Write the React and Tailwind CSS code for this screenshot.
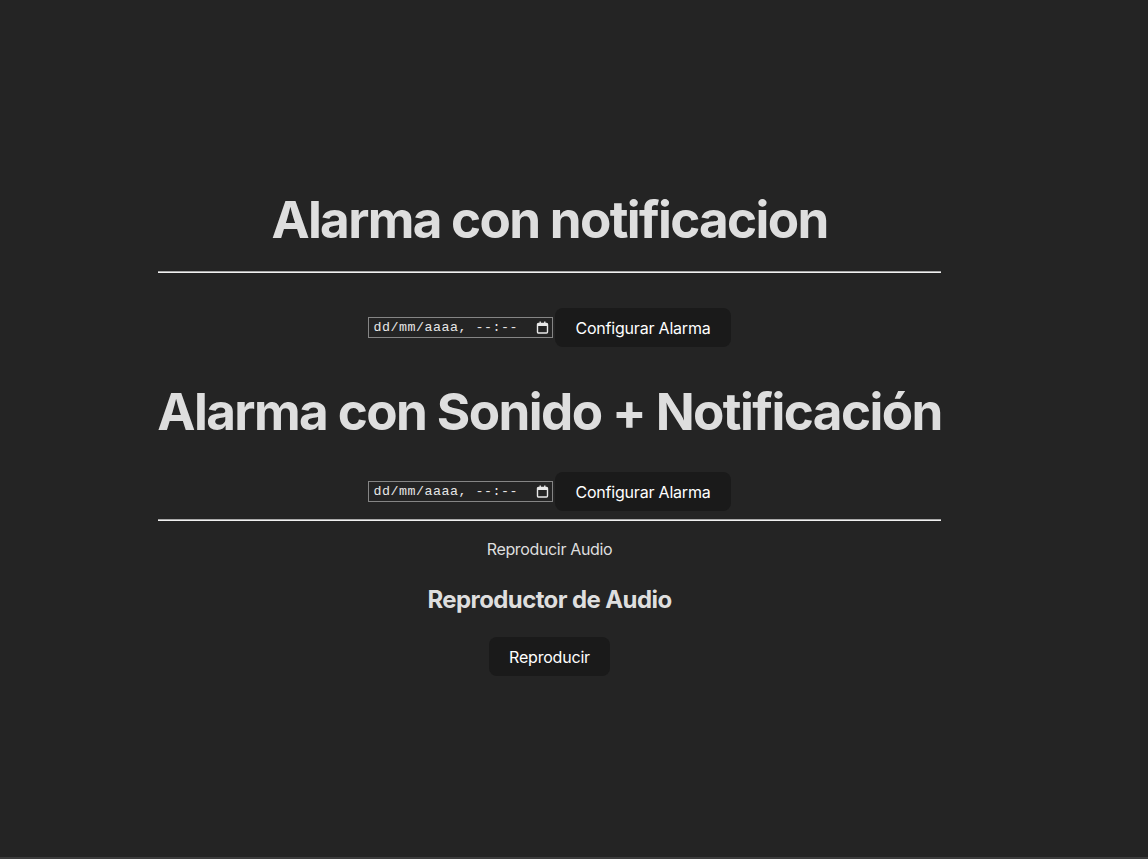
import React from 'react';

function CalendarIcon() {
    return (
        <svg width="13" height="13" viewBox="0 0 13 13" fill="none">
            <rect x="1.5" y="2.5" width="10" height="9.5" rx="1" stroke="#e8e8e8" strokeWidth="1.4" />
            <rect x="1.5" y="2.5" width="10" height="2.5" fill="#e8e8e8" />
            <rect x="3.5" y="0.5" width="1.4" height="3" fill="#e8e8e8" />
            <rect x="8.1" y="0.5" width="1.4" height="3" fill="#e8e8e8" />
        </svg>
    );
}

function DateInput() {
    // imitación del input datetime-local con formato es
    return (
        <div className="w-[185px] h-[21px] border border-[#858585] bg-[#242424] flex items-center justify-between pl-[4px] pr-[3px] text-[13.33px] text-[#e6e6e6] font-['Liberation_Mono',monospace] tracking-[0.5px]">
            <span className="whitespace-pre">dd/mm/aaaa, --:--</span>
            <CalendarIcon />
        </div>
    );
}

function Button({ children }) {
    return (
        <button className="h-[39px] px-[20px] rounded-lg bg-[#1a1a1a] text-white text-base font-normal tracking-[-0.2px] leading-none">
            {children}
        </button>
    );
}

function Rule() {
    return (
        <div className="w-full">
            <div className="h-px bg-[#a8a8a8]" />
            <div className="h-px bg-[#f0f0f0]" />
        </div>
    );
}

export default function App() {
    return (
        <div className="min-h-[859px] bg-[#242424] flex flex-col font-['Inter',sans-serif] text-[#dedede]">
            <div className="flex-1 flex justify-center pt-[191px] pr-[49px]">
                <div className="w-[783px] flex flex-col items-center text-center">
                    <h1 className="text-[51.2px] leading-[56px] font-bold tracking-[-1.7px]">Alarma con notificacion</h1>
                    <div className="w-full mt-[24px]"><Rule /></div>
                    <div className="flex items-center gap-[2px] mt-[35px]">
                        <DateInput />
                        <Button>Configurar Alarma</Button>
                    </div>
                    <h1 className="text-[51.2px] leading-[56px] font-bold tracking-[-1.6px] mt-[36px] whitespace-nowrap">Alarma con Sonido + Notificación</h1>
                    <div className="flex items-center gap-[2px] mt-[33px]">
                        <DateInput />
                        <Button>Configurar Alarma</Button>
                    </div>
                    <div className="w-full mt-[8px]"><Rule /></div>
                    <p className="mt-[16px] text-base leading-6 tracking-[-0.35px] text-[#dedede]">Reproducir Audio</p>
                    <h2 className="mt-[25px] text-2xl leading-7 font-bold tracking-[-0.6px]">Reproductor de Audio</h2>
                    <div className="mt-[23px]">
                        <Button>Reproducir</Button>
                    </div>
                </div>
            </div>
            <div className="h-[2px] bg-[#3c3c3c]" />
        </div>
    );
}
